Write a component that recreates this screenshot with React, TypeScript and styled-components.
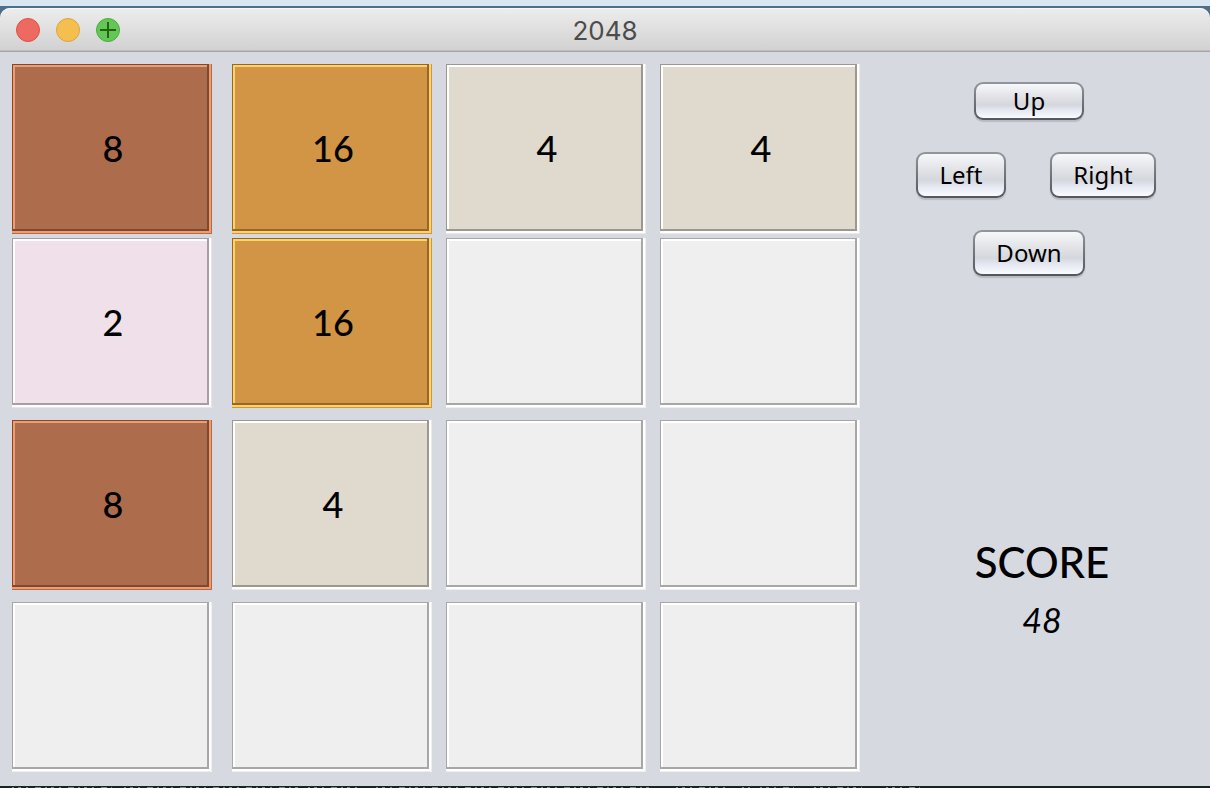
import React from "react";
import styled, { createGlobalStyle } from "styled-components";

const GlobalStyle = createGlobalStyle`
  * { box-sizing: border-box; }
  body { margin: 0; background: #dae6f1; }
`;

const Desktop = styled.div`
  display: flex;
  flex-direction: column;
  min-height: 100vh;
  padding-top: 6px;
`;

const Window = styled.section`
  flex: 1;
  display: flex;
  flex-direction: column;
  padding-top: 2px;
  background: #4b6f8c;
`;

const TitleBar = styled.header`
  display: grid;
  grid-template-columns: 1fr auto 1fr;
  align-items: center;
  height: 44px;
  padding: 0 16px;
  border-bottom: 1px solid #a5a5a5;
  border-radius: 10px 10px 0 0;
  background: linear-gradient(#ededed, #d1d1d1);
  box-shadow: inset 0 1px 0 #f8f8f8, inset 0 -1px 0 #bebebe;
`;

const Lights = styled.div`
  display: flex;
  gap: 16px;
`;

const Light = styled.button<{ $fill: string; $rim: string }>`
  display: grid;
  place-items: center;
  width: 24px;
  height: 24px;
  padding: 0;
  border: 1px solid ${(p) => p.$rim};
  border-radius: 50%;
  background: ${(p) => p.$fill};
`;

const Title = styled.h1`
  margin: 0;
  padding-top: 2px;
  color: #4c4c4a;
  font: 400 26px/32px Inter, sans-serif;
`;

const Content = styled.main`
  flex: 1;
  display: flex;
  align-items: flex-start;
  padding: 12px 12px 14px;
  background: #d6d9e0;
`;

const Board = styled.div`
  flex: 0 1 848px;
  display: flex;
  gap: 14px;
`;

const Column = styled.div<{ $spaced?: boolean }>`
  flex: 1;
  display: flex;
  flex-direction: column;
  gap: 12px;
  margin-right: ${(p) => (p.$spaced ? "6px" : "0")};
`;

const Pair = styled.div`
  display: flex;
  flex-direction: column;
  gap: 4px;
`;

type Tone = { face: string; light: string; dark: string; edge: string };

const tones: Record<string, Tone> = {
  "": { face: "#efefef", light: "#ffffff", dark: "#a7a7a7", edge: "#efefef" },
  "2": { face: "#f0e0ea", light: "#ffffff", dark: "#a89da4", edge: "#f0e0ea" },
  "4": { face: "#e0d9cd", light: "#ffffff", dark: "#9d988f", edge: "#eeeae2" },
  "8": { face: "#ad6c4b", light: "#f79a6b", dark: "#794b34", edge: "#ad6c4b" },
  "16": { face: "#d29445", light: "#ffd362", dark: "#936730", edge: "#d29445" },
};

const Tile = styled.div<{ $tone: Tone }>`
  display: grid;
  place-items: center;
  height: 170px;
  padding: 0 0 2px 2px;
  color: #000;
  font: 500 36px/44px "Comic Sans MS", Lato, sans-serif;
  background: ${(p) => p.$tone.face};
  box-shadow:
    inset -1px -1px 0 ${(p) => p.$tone.edge},
    inset -3px -3px 0 ${(p) => p.$tone.light},
    inset 1px 1px 0 ${(p) => p.$tone.dark},
    inset -5px -5px 0 ${(p) => p.$tone.dark},
    inset 3px 3px 0 ${(p) => p.$tone.light};
`;

const Side = styled.aside`
  flex: 1;
  display: flex;
  flex-direction: column;
  align-items: center;
  padding-top: 18px;
`;

const Pad = styled.div`
  display: flex;
  flex-direction: column;
  align-items: center;
`;

const Row = styled.div`
  display: flex;
  gap: 44px;
  margin: 32px 0;
  padding-left: 14px;
`;

const Key = styled.button<{ $w: number; $short?: boolean }>`
  width: ${(p) => p.$w}px;
  height: ${(p) => (p.$short ? 38 : 46)}px;
  padding: 0;
  border: 2px solid transparent;
  border-radius: 9px;
  color: #000;
  font: 400 24px/32px "Noto Sans", sans-serif;
  background:
    linear-gradient(#f7f8fa, #e3e4e8 35%, #d4d7dd 62%, #e6e9f2 78%, #fafbff) padding-box,
    linear-gradient(#92979c, #53565b) border-box;
  box-shadow: 0 2px 1px #b8bbc2;
`;

const Score = styled.div`
  display: flex;
  flex-direction: column;
  align-items: center;
  gap: 12px;
  margin-top: 260px;
  padding-left: 26px;
  color: #000;
`;

const ScoreLabel = styled.label`
  font: 500 42px/52px "Comic Sans MS", Lato, sans-serif;
`;

const ScoreValue = styled.output`
  font: italic 400 34px/40px "Comic Sans MS", Lato, sans-serif;
`;

const Terminal = styled.footer`
  height: 2px;
  background: #10281f;

  svg { display: block; }
`;

const columns = [
  ["8", "2", "8", ""],
  ["16", "16", "4", ""],
  ["4", "", "", ""],
  ["4", "", "", ""],
];

export default function App() {
  return (
    <Desktop>
      <GlobalStyle />
      <Window>
        <TitleBar>
          <Lights>
            <Light aria-label="Close" $fill="#ec6a5f" $rim="#df5148" />
            <Light aria-label="Minimize" $fill="#f5bf50" $rim="#dfa33c" />
            <Light aria-label="Zoom" $fill="#62c755" $rim="#4dac3f">
              <svg width="16" height="16" viewBox="0 0 16 16" stroke="#285f17" strokeWidth="2">
                <path d="M8 0v16M0 8h16" />
              </svg>
            </Light>
          </Lights>
          <Title>2048</Title>
        </TitleBar>
        <Content>
          <Board>
            {columns.map((values, i) => (
              <Column key={i} $spaced={i === 0}>
                <Pair>
                  <Tile $tone={tones[values[0]]}>{values[0]}</Tile>
                  <Tile $tone={tones[values[1]]}>{values[1]}</Tile>
                </Pair>
                <Tile $tone={tones[values[2]]}>{values[2]}</Tile>
                <Tile $tone={tones[values[3]]}>{values[3]}</Tile>
              </Column>
            ))}
          </Board>
          <Side>
            <Pad>
              <Key $w={110} $short>Up</Key>
              <Row>
                <Key $w={90}>Left</Key>
                <Key $w={106}>Right</Key>
              </Row>
              <Key $w={112}>Down</Key>
            </Pad>
            <Score>
              <ScoreLabel htmlFor="score">SCORE</ScoreLabel>
              <ScoreValue id="score">48</ScoreValue>
            </Score>
          </Side>
        </Content>
        <Terminal>
          <svg width="920" height="2" aria-hidden="true">
            <path
              d="M12 1.5H112M124 1.5H298M308 1.5H358M376 1.5H652M676 1.5H726M742 1.5H750M760 1.5H794M814 1.5H862M886 1.5H920"
              stroke="#7f8882"
              strokeDasharray="2 4 3 5 2 7 6 4"
            />
          </svg>
        </Terminal>
      </Window>
    </Desktop>
  );
}
